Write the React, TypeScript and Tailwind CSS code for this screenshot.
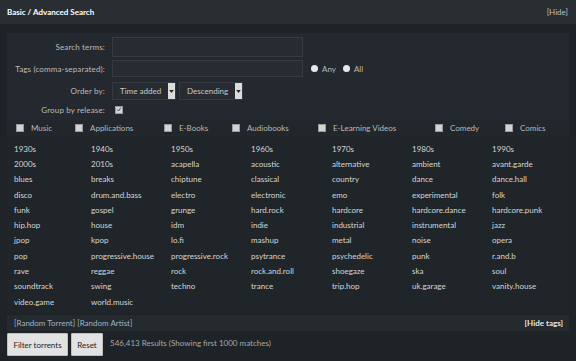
import React from "react";

const tags = [
  "1930s", "1940s", "1950s", "1960s", "1970s", "1980s", "1990s",
  "2000s", "2010s", "acapella", "acoustic", "alternative", "ambient", "avant.garde",
  "blues", "breaks", "chiptune", "classical", "country", "dance", "dance.hall",
  "disco", "drum.and.bass", "electro", "electronic", "emo", "experimental", "folk",
  "funk", "gospel", "grunge", "hard.rock", "hardcore", "hardcore.dance", "hardcore.punk",
  "hip.hop", "house", "idm", "indie", "industrial", "instrumental", "jazz",
  "jpop", "kpop", "lo.fi", "mashup", "metal", "noise", "opera",
  "pop", "progressive.house", "progressive.rock", "psytrance", "psychedelic", "punk", "r.and.b",
  "rave", "reggae", "rock", "rock.and.roll", "shoegaze", "ska", "soul",
  "soundtrack", "swing", "techno", "trance", "trip.hop", "uk.garage", "vanity.house",
  "video.game", "world.music",
];

const categories: [string, string][] = [
  ["Music", "w-[59px]"],
  ["Applications", "w-[89px]"],
  ["E-Books", "w-[68px]"],
  ["Audiobooks", "w-[86px]"],
  ["E-Learning Videos", "w-[117px]"],
  ["Comedy", "w-[70px]"],
  ["Comics", "flex-1"],
];

const Box = ({ checked }: { checked?: boolean }) => (
  <span className="w-[8px] h-[8px] bg-[#d4d4d4] border border-[#9a9a9a] inline-flex items-center justify-center shrink-0">
    {checked && (
      <svg viewBox="0 0 8 8" className="w-[7px] h-[7px]">
        <path d="M1.5 4 L3.3 6 L6.5 1.5" stroke="#3b4a8a" strokeWidth="1.3" fill="none" />
      </svg>
    )}
  </span>
);

const Select = ({ label, w }: { label: string; w: string }) => (
  <div className={`flex h-[18px] border border-[#353b40] bg-[#262c31] ${w}`}>
    <span className="flex-1 flex items-center px-[7px] whitespace-nowrap text-[#c8c8c8]">{label}</span>
    <span className="w-[9px] bg-[#dcdcdc] flex items-center justify-center">
      <svg viewBox="0 0 6 4" className="w-[5px] h-[3px]">
        <path d="M0 0 H6 L3 4 Z" fill="#222" />
      </svg>
    </span>
  </div>
);

export default function App() {
  return (
    <div
      className="w-[576px] h-[361px] bg-[#1e2327] text-[8px] text-[#c9c9c9] overflow-hidden"
      style={{ fontFamily: 'Lato, "Liberation Sans", sans-serif' }}
    >
      <div className="h-[24px] bg-[#282e32] flex items-center justify-between px-[7px]">
        <span className="font-bold text-white">Basic / Advanced Search</span>
        <span className="text-[#b8c0c8] mr-[1px]">[Hide]</span>
      </div>

      <div className="mt-[9px] mx-[7px] bg-[#23292e]">
        <div className="pt-[4px] pb-[3px] flex flex-col gap-[3px]">
          <div className="flex items-center">
            <span className="w-[98px] text-right text-[#bdbdbd] tracking-[0.15px]">Search terms:</span>
            <div className="ml-[7px] w-[191px] h-[20px] border border-[#353b40] bg-[#262c31]" />
          </div>
          <div className="flex items-center">
            <span className="w-[98px] text-right text-[#bdbdbd] tracking-[0.15px]">Tags (comma-separated):</span>
            <div className="ml-[7px] w-[191px] h-[17px] border border-[#353b40] bg-[#262c31]" />
            <span className="ml-[8px] w-[7px] h-[7px] rounded-full bg-[#e8e8e8]" />
            <span className="ml-[4px] text-[#bdbdbd]">Any</span>
            <span className="ml-[7px] w-[7px] h-[7px] rounded-full bg-[#e8e8e8]" />
            <span className="ml-[4px] text-[#bdbdbd]">All</span>
          </div>
          <div className="flex items-center mt-[2px]">
            <span className="w-[98px] text-right text-[#bdbdbd] tracking-[0.15px]">Order by:</span>
            <div className="ml-[7px] flex gap-[3px]">
              <Select label="Time added" w="w-[64px]" />
              <Select label="Descending" w="w-[64px]" />
            </div>
          </div>
          <div className="flex items-center h-[14px]">
            <span className="w-[98px] text-right text-[#bdbdbd] tracking-[0.15px]">Group by release:</span>
            <span className="ml-[10px]"><Box checked /></span>
          </div>
        </div>
      </div>

      <div className="mx-[7px] bg-[#21272b]">
        <div className="flex items-center h-[16px] px-[9px]">
          {categories.map(([name, w]) => (
            <div key={name} className={`flex items-center gap-[7px] ${w}`}>
              <Box />
              <span className="text-[#b9b9b9]">{name}</span>
            </div>
          ))}
        </div>
      </div>

      <div className="mx-[7px] bg-[#1f2529] pt-[5px] pb-[4px] px-[7px] grid grid-cols-[77px_80px_80px_81px_80px_80px_1fr] auto-rows-[15.3px] items-center">
        {tags.map((t) => (
          <span key={t} className="text-[#d6d6d6]">{t}</span>
        ))}
      </div>

      <div className="mx-[7px] mt-[2px] h-[16px] bg-[#242a2e] flex items-center justify-between pl-[7px] pr-[6px]">
        <span className="text-[#9fb4c8]">[Random Torrent] [Random Artist]</span>
        <span className="text-[#e6e6e6] font-bold">[Hide tags]</span>
      </div>

      <div className="flex items-center px-[7px] pt-[2px] gap-[3px]">
        <button className="w-[61px] h-[23px] bg-[#e2e2e2] border border-[#bfbfbf] text-[#222] rounded-[1px] whitespace-nowrap">Filter torrents</button>
        <button className="w-[32px] h-[23px] bg-[#e2e2e2] border border-[#bfbfbf] text-[#222] rounded-[1px]">Reset</button>
        <span className="ml-[4px] text-[#a9a9a9] -mt-[3px]">546,413 Results (Showing first 1000 matches)</span>
      </div>
    </div>
  );
}
